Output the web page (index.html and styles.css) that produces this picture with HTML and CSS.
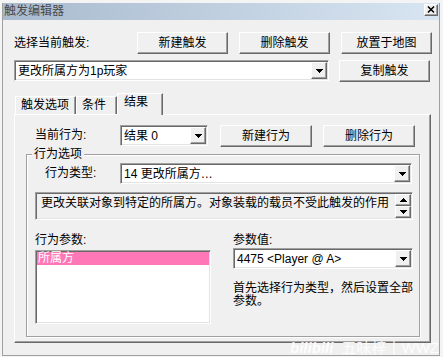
FILE: index.html
```html
<!DOCTYPE html>
<html lang="zh-CN">

<head>
	<meta charset="UTF-8">
	<title>触发编辑器</title>
	<link rel="stylesheet" href="styles.css">
</head>

<body>
	<div class="window">
		<div class="titlebar">
			<span class="title">触发编辑器</span>
			<span class="close raised">
				<svg width="12" height="10" viewBox="0 0 12 10"><path d="M3 1.5 L9 7.5 M9 1.5 L3 7.5" stroke="#000" stroke-width="1.6" fill="none"/></svg>
			</span>
		</div>

		<div class="content">
			<!-- 選択中のトリガー -->
			<div class="row row-select">
				<span class="label label-select">选择当前触发:</span>
				<button class="btn raised">新建触发</button>
				<button class="btn raised btn-gap">删除触发</button>
				<button class="btn raised btn-gap">放置于地图</button>
			</div>
			<div class="row row-trigger">
				<div class="combo combo-trigger">
					<span class="combo-text">更改所属方为1p玩家</span>
					<span class="drop raised"><svg width="7" height="4" viewBox="0 0 7 4"><path d="M0 0h7v1h-1v1h-1v1h-1v1h-1v-1h-1v-1h-1v-1h-1z"/></svg></span>
				</div>
				<button class="btn raised btn-copy">复制触发</button>
			</div>

			<!-- タブ -->
			<div class="tabs">
				<span class="tab tab-options">触发选项</span>
				<span class="tab tab-cond">条件</span>
				<span class="tab tab-result active">结果</span>
			</div>
			<div class="panel">
				<div class="row row-action">
					<span class="label label-action">当前行为:</span>
					<div class="combo combo-action">
						<span class="combo-text">结果 0</span>
						<span class="drop raised"><svg width="7" height="4" viewBox="0 0 7 4"><path d="M0 0h7v1h-1v1h-1v1h-1v1h-1v-1h-1v-1h-1v-1h-1z"/></svg></span>
					</div>
					<button class="btn raised btn-action">新建行为</button>
					<button class="btn raised btn-action btn-gap2">删除行为</button>
				</div>

				<div class="group">
					<span class="legend">行为选项</span>
					<div class="row row-type">
						<span class="label label-type">行为类型:</span>
						<div class="combo combo-type">
							<span class="combo-text">14 更改所属方…</span>
							<span class="drop raised"><svg width="7" height="4" viewBox="0 0 7 4"><path d="M0 0h7v1h-1v1h-1v1h-1v1h-1v-1h-1v-1h-1v-1h-1z"/></svg></span>
						</div>
					</div>

					<div class="desc">
						<span class="desc-text">更改关联对象到特定的所属方。对象装载的载员不受此触发的作用</span>
						<div class="spin">
							<span class="spin-btn raised"><svg width="7" height="4" viewBox="0 0 7 4"><path d="M3 0h1v1h1v1h1v1h1v1h-7v-1h1v-1h1v-1h1z"/></svg></span>
							<span class="spin-btn raised"><svg width="7" height="4" viewBox="0 0 7 4"><path d="M0 0h7v1h-1v1h-1v1h-1v1h-1v-1h-1v-1h-1v-1h-1z"/></svg></span>
						</div>
					</div>

					<div class="params">
						<div class="param-left">
							<span class="label">行为参数:</span>
							<div class="listbox">
								<div class="list-item selected">所属方</div>
							</div>
						</div>
						<div class="param-right">
							<span class="label">参数值:</span>
							<div class="combo combo-value">
								<span class="combo-text">4475 &lt;Player @ A&gt;</span>
								<span class="drop raised"><svg width="7" height="4" viewBox="0 0 7 4"><path d="M0 0h7v1h-1v1h-1v1h-1v1h-1v-1h-1v-1h-1v-1h-1z"/></svg></span>
							</div>
							<p class="hint">首先选择行为类型，然后设置全部参数。</p>
						</div>
					</div>
				</div>
			</div>
		</div>
	</div>

	<div class="watermark"><b class="wm-logo">bilibili</b> 五味梓丨WWZ</div>
</body>

</html>
```

FILE: styles.css
```css
* {
	margin  :0;
	padding :0;
}
body {
	background: #f4f4f4;
	font-family: "Liberation Sans", "Noto Sans CJK SC", sans-serif;
	font-size: 12px;
	line-height: 14px;
	color: #000;
}

/* 共通の立体表現 */
.raised {
	box-sizing: border-box;
	background: #f0f0f0;
	border: 1px solid;
	border-color: #fff #696969 #696969 #fff;
	box-shadow: inset -1px -1px 0 #a0a0a0;
}
.btn {
	font: inherit;
	color: #000;
	width  : 91px;
	height : 22px;
	flex-shrink: 0;
}

.window {
	width  : 436px;
	height : 352px;
	margin : 3px 0 0 2px;
	border : 1px solid #a0a0a0;
	border-top: 0;
	background: #f0f0f0;
}
.titlebar {
	height: 17px;
	display: flex;
	justify-content: space-between;
	padding: 0 1px;
	background: linear-gradient(to right, #a8bace, #d8e5f2);
}
.title {
	line-height: 17px;
	color: #4a4a4a;
}
.close {
	width: 14px;
	height: 12px;
	margin-top: 1px;
	display: flex;
	align-items: center;
	justify-content: center;
}

.content {
	padding-left: 11px;
}
.row {
	display: flex;
	align-items: flex-start;
}
.label {
	display: block;
	flex-shrink: 0;
}

.row-select {
	margin-top: 12px;
	align-items: center;
}
.label-select {
	width: 123px;
}
.btn-gap {
	margin-left: 11px;
}
.row-trigger {
	margin-top: 6px;
}
.btn-copy {
	margin-left: 10px;
}

/* コンボボックス */
.combo {
	box-sizing: border-box;
	display: flex;
	align-items: center;
	height: 21px;
	padding: 1px;
	background: #fff;
	border: 1px solid;
	border-color: #a0a0a0 #fff #fff #a0a0a0;
	box-shadow: inset 1px 1px 0 #696969, inset -1px -1px 0 #e3e3e3;
}
.combo-text {
	flex: 1;
	padding-left: 2px;
	white-space: nowrap;
	overflow: hidden;
}
.drop {
	width: 16px;
	height: 17px;
	display: flex;
	align-items: center;
	justify-content: center;
}
.combo-trigger {
	width: 315px;
}

/* タブ */
.tabs {
	display: flex;
	align-items: flex-end;
	height: 21px;
	margin-top: 11px;
	padding-left: 1px;
	position: relative;
	z-index: 1;
}
.tab {
	box-sizing: border-box;
	height: 18px;
	padding-left: 5px;
	border: 1px solid;
	border-bottom: 0;
	border-color: #fff #696969 transparent #fff;
	box-shadow: inset -1px 0 0 #a0a0a0;
	line-height: 17px;
}
.tab-options { width: 61px; }
.tab-cond    { width: 41px; }
.tab-result  { width: 46px; padding-left: 6px; }
.tab.active {
	height: 22px;
	margin-bottom: -1px;
	background: #f0f0f0;
}

.panel {
	box-sizing: border-box;
	width  : 417px;
	height : 229px;
	padding: 10px 0 0 11px;
	border : 1px solid;
	border-color: #fff #696969 #696969 #fff;
	box-shadow: inset -1px -1px 0 #a0a0a0;
}
.row-action {
	margin-left: 9px;
}
.label-action {
	width: 85px;
	line-height: 21px;
}
.combo-action {
	width: 88px;
}
.btn-action {
	width: 92px;
	margin-left: 12px;
}
.btn-gap2 {
	margin-left: 11px;
}

/* グループボックス */
.group {
	position: relative;
	box-sizing: border-box;
	width  : 394px;
	height : 183px;
	margin-top: 7px;
	padding: 8px 0 0 8px;
	border: 1px solid #a0a0a0;
	box-shadow: inset 1px 1px 0 #fff, 1px 1px 0 #fff;
}
.legend {
	position: absolute;
	left: 5px;
	top: -8px;
	padding: 0 2px;
	background: #f0f0f0;
}
.label-type {
	width: 75px;
	margin-left: 10px;
	line-height: 21px;
}
.combo-type {
	width: 292px;
}

.desc {
	box-sizing: border-box;
	display: flex;
	width  : 378px;
	height : 28px;
	margin-top: 8px;
	padding: 1px;
	border: 1px solid;
	border-color: #a0a0a0 #fff #fff #a0a0a0;
	box-shadow: inset 1px 1px 0 #696969, inset -1px -1px 0 #e3e3e3;
}
.desc-text {
	flex: 1;
	padding: 2px 0 0 4px;
	white-space: nowrap;
	overflow: hidden;
}
.spin {
	display: flex;
	flex-direction: column;
	width: 16px;
}
.spin-btn {
	height: 12px;
	display: flex;
	align-items: center;
	justify-content: center;
}

.params {
	display: flex;
	margin-top: 13px;
}
.param-left {
	width: 176px;
}
.param-right {
	width: 181px;
	margin-left: 22px;
}
.listbox {
	box-sizing: border-box;
	height: 74px;
	margin-top: 3px;
	padding: 1px;
	background: #fff;
	border: 1px solid;
	border-color: #a0a0a0 #fff #fff #a0a0a0;
	box-shadow: inset 1px 1px 0 #696969, inset -1px -1px 0 #e3e3e3;
}
.list-item {
	height: 13px;
	line-height: 13px;
	padding-left: 1px;
}
.list-item.selected {
	background: #ff77b7;
	color: #fff;
}
.combo-value {
	width: 180px;
	margin-top: 1px;
}
.hint {
	margin-top: 13px;
	line-height: 13px;
}

/* 動画の透かし */
.watermark {
	position: absolute;
	left: 290px;
	top: 339px;
	font-size: 15px;
	line-height: 18px;
	color: #fff;
	opacity: 0.9;
	white-space: nowrap;
}
.wm-logo {
	font-style: italic;
	margin-right: 4px;
}
```
